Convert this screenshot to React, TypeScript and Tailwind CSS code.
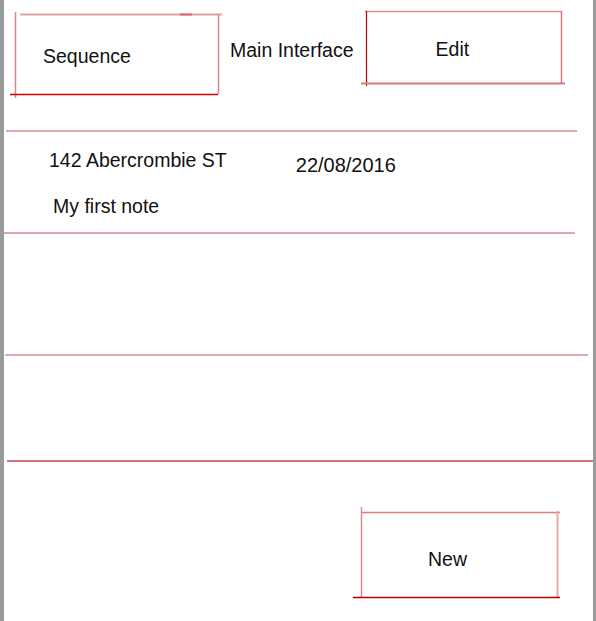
import React from "react";

type Ln = { x1: number; y1: number; x2: number; y2: number; c: string; w: number };

function SketchBox({
  w,
  h,
  lines,
  label,
  padL,
  padT,
  className,
}: {
  w: number;
  h: number;
  lines: Ln[];
  label: string;
  padL: number;
  padT: number;
  className: string;
}) {
  return (
    <div className={"relative shrink-0 flex items-start " + className}>
      <svg
        className="absolute left-0 top-0 overflow-visible pointer-events-none"
        width={w}
        height={h}
      >
        {lines.map((l, i) => (
          <line key={i} x1={l.x1} y1={l.y1} x2={l.x2} y2={l.y2} stroke={l.c} strokeWidth={l.w} />
        ))}
      </svg>
      <span style={{ marginLeft: padL, marginTop: padT }} className="leading-[22px]">
        {label}
      </span>
    </div>
  );
}

export default function App() {
  return (
    <div
      className="w-[596px] h-[621px] flex bg-white text-[19.5px] text-[#111]"
      style={{ fontFamily: '"Liberation Sans", Arial, sans-serif' }}
    >
      <div className="w-[4px] bg-[#9a9a9a] shrink-0" />
      <div className="flex-1 flex flex-col">
        {/* header */}
        <div className="h-[130px] flex items-start">
          <SketchBox
            className="ml-[11px] mt-[14px] w-[203px] h-[80px]"
            w={203}
            h={80}
            padL={28}
            padT={31}
            label="Sequence"
            lines={[
              { x1: 5, y1: 0.5, x2: 207, y2: 0.5, c: "#e3a3a6", w: 2 },
              { x1: 165, y1: 0.5, x2: 177, y2: 0.5, c: "#d6686c", w: 2 },
              { x1: 0.5, y1: -2, x2: 0.5, y2: 84, c: "#d9878a", w: 1.5 },
              { x1: 203.5, y1: 0, x2: 203.5, y2: 80, c: "#d98589", w: 1.5 },
              { x1: -5, y1: 80.5, x2: 203, y2: 80.5, c: "#d40000", w: 1.5 },
            ]}
          />
          <span className="ml-[12px] mt-[39px] leading-[22px] shrink-0">Main Interface</span>
          <SketchBox
            className="ml-[12px] mt-[11px] w-[195px] h-[72px]"
            w={195}
            h={72}
            padL={70}
            padT={27}
            label="Edit"
            lines={[
              { x1: -1, y1: 0.5, x2: 196, y2: 0.5, c: "#de8d90", w: 1.5 },
              { x1: 0.5, y1: 0, x2: 0.5, y2: 75, c: "#c00000", w: 1.2 },
              { x1: 195.5, y1: 0, x2: 195.5, y2: 73, c: "#d8787c", w: 1.5 },
              { x1: -5, y1: 72.5, x2: 199, y2: 72.5, c: "#d9797c", w: 2 },
            ]}
          />
        </div>

        <div className="h-[2px] ml-[2px] w-[571px] bg-[#e2a7aa]" />

        {/* note row */}
        <div className="h-[100px] flex flex-col">
          <div className="flex items-start pt-[17px]">
            <span className="ml-[45px] leading-[22px]">142 Abercrombie ST</span>
            <span className="ml-[69px] mt-[5px] leading-[22px] text-[20px]">22/08/2016</span>
          </div>
          <span className="ml-[49px] mt-[19px] leading-[22px]">My first note</span>
        </div>

        <div className="h-[2px] w-[571px] bg-[#e2a7aa]" />
        <div className="h-[120px]" />
        <div className="h-[2px] ml-[1px] w-[583px] bg-[#e2a7aa]" />
        <div className="h-[104px]" />
        <div className="h-[2px] ml-[3px] w-[586px] bg-[#cf7579]" />

        {/* footer */}
        <div className="flex-1 flex items-start">
          <SketchBox
            className="ml-[357px] mt-[50px] w-[196px] h-[85px]"
            w={196}
            h={85}
            padL={67}
            padT={36}
            label="New"
            lines={[
              { x1: 0, y1: 0.5, x2: 199, y2: 0.5, c: "#dc7d80", w: 1.5 },
              { x1: 0.5, y1: -5, x2: 0.5, y2: 86, c: "#de8a8d", w: 1.5 },
              { x1: 196.5, y1: -1, x2: 196.5, y2: 86, c: "#e8a7aa", w: 2 },
              { x1: -8, y1: 85.5, x2: 199, y2: 85.5, c: "#c00000", w: 1.5 },
            ]}
          />
        </div>
      </div>
      <div className="w-[3px] bg-[#9a9a9a] shrink-0" />
    </div>
  );
}
